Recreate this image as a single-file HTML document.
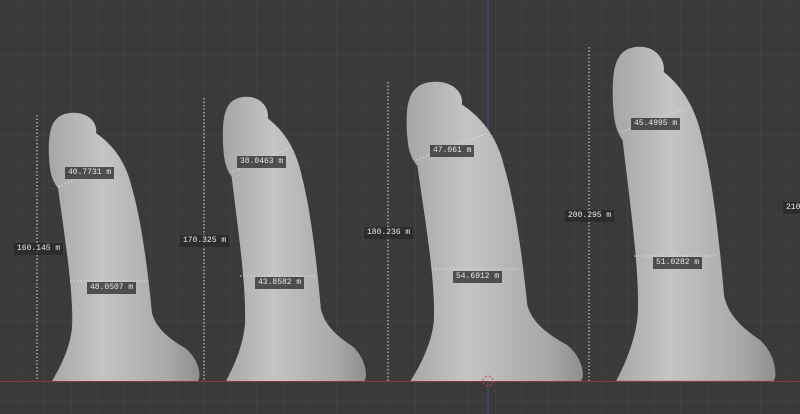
<!DOCTYPE html><html><head><style>
body{margin:0;width:800px;height:414px;overflow:hidden;background:#3a3a3a;position:relative;font-family:"Liberation Mono",monospace}
.l{position:absolute;background:rgba(40,40,40,.75);color:#e8e8e8;font-size:8px;padding:1px 3px;line-height:10px;white-space:nowrap}
</style></head><body>
<svg width="800" height="414" style="position:absolute;left:0;top:0">
<defs><pattern id="g" width="26.5" height="26.5" patternUnits="userSpaceOnUse" x="-8" y="3"><path d="M26.5 0V26.5H0" fill="none" stroke="#454545" stroke-width="1"/></pattern>
<linearGradient id="s" x1="0" x2="1" y1="0" y2="0"><stop offset="0" stop-color="#a6a6a6"/><stop offset="0.35" stop-color="#c4c4c4"/><stop offset="0.8" stop-color="#a8a8a8"/><stop offset="1" stop-color="#8e8e8e"/></linearGradient>
<path id="m" d="M2,268 C10,255 20,235 22,215 C24,180 14,120 8,75 C0,65 0,55 -1,45 C-2,20 0,2 20,0 C38,-2 48,10 46,20 C60,30 75,45 82,75 C92,110 98,160 102,200 C106,215 118,225 135,235 C148,245 152,262 148,268 Z"/></defs>
<rect width="800" height="414" fill="url(#g)"/>
<line x1="488" y1="0" x2="488" y2="414" stroke="#3d5a80" stroke-width="1"/>
<g fill="url(#s)">
<use href="#m" transform="translate(50,113)"/>
<use href="#m" transform="translate(224,97) scale(0.95,1.06)"/>
<use href="#m" transform="translate(408,82) scale(1.17,1.116)"/>
<use href="#m" transform="translate(614,47) scale(1.08,1.246)"/>
</g>
<rect x="0" y="381" width="800" height="1" fill="#8a3a3a"/>
<g stroke="#ddd" stroke-dasharray="1.5 2" stroke-width="1">
<line x1="37" y1="115" x2="37" y2="381"/><line x1="204" y1="98" x2="204" y2="381"/>
<line x1="388" y1="82" x2="388" y2="381"/><line x1="589" y1="47" x2="589" y2="381"/>
<line x1="58" y1="187" x2="118" y2="160"/><line x1="70" y1="281" x2="150" y2="281"/>
<line x1="232" y1="172" x2="290" y2="148"/><line x1="240" y1="276" x2="316" y2="276"/>
<line x1="416" y1="160" x2="488" y2="133"/><line x1="432" y1="269" x2="520" y2="269"/>
<line x1="622" y1="132" x2="690" y2="107"/><line x1="634" y1="256" x2="716" y2="256"/>
</g>
<circle cx="488" cy="381" r="5" fill="none" stroke="#e04040" stroke-dasharray="2 2"/>
</svg>
<div class="l" style="left:14px;top:243px">160.145 m</div>
<div class="l" style="left:180px;top:235px">170.325 m</div>
<div class="l" style="left:364px;top:227px">180.236 m</div>
<div class="l" style="left:565px;top:210px">200.295 m</div>
<div class="l" style="left:783px;top:202px">210</div>
<div class="l" style="left:65px;top:167px">40.7731 m</div>
<div class="l" style="left:87px;top:282px">48.0507 m</div>
<div class="l" style="left:237px;top:156px">38.0463 m</div>
<div class="l" style="left:255px;top:277px">43.8582 m</div>
<div class="l" style="left:430px;top:145px">47.061 m</div>
<div class="l" style="left:453px;top:271px">54.6912 m</div>
<div class="l" style="left:631px;top:118px">45.4995 m</div>
<div class="l" style="left:653px;top:257px">51.0282 m</div>
</body></html>
